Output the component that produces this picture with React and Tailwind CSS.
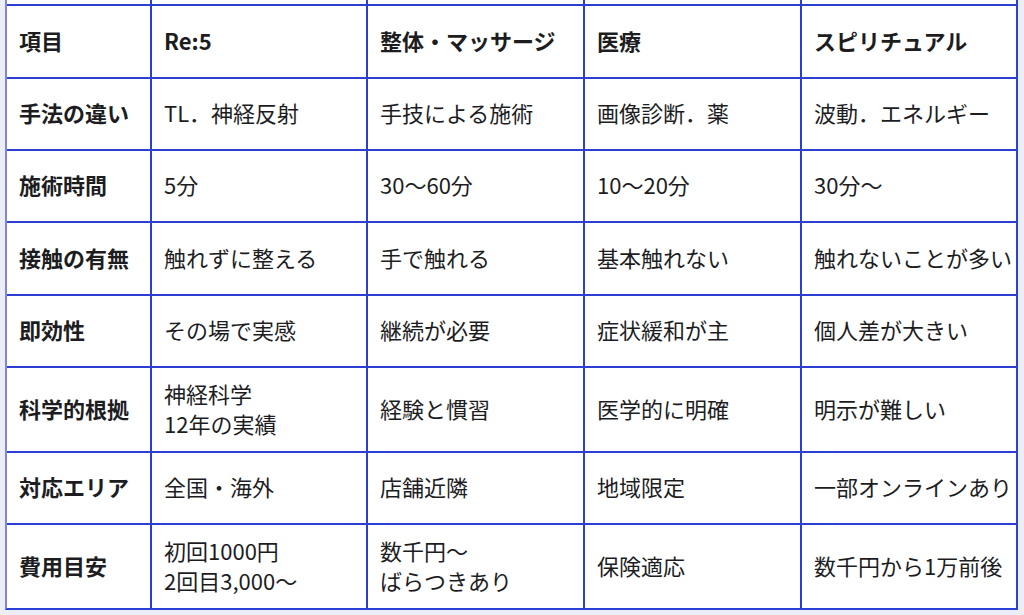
import React from 'react';

const rows = [
  { h: 'h-[73px]', cells: ['項目', 'Re:5', '整体・マッサージ', '医療', 'スピリチュアル'], head: true },
  { h: 'h-[72px]', cells: ['手法の違い', 'TL．神経反射', '手技による施術', '画像診断．薬', '波動．エネルギー'] },
  { h: 'h-[72px]', cells: ['施術時間', '5分', '30〜60分', '10〜20分', '30分〜'] },
  { h: 'h-[73px]', cells: ['接触の有無', '触れずに整える', '手で触れる', '基本触れない', '触れないことが多い'] },
  { h: 'h-[72px]', cells: ['即効性', 'その場で実感', '継続が必要', '症状緩和が主', '個人差が大きい'] },
  { h: 'h-[85px]', cells: ['科学的根拠', ['神経科学', '12年の実績'], '経験と慣習', '医学的に明確', '明示が難しい'] },
  { h: 'h-[72px]', cells: ['対応エリア', '全国・海外', '店舗近隣', '地域限定', '一部オンラインあり'] },
  { h: 'h-[85px]', cells: ['費用目安', ['初回1000円', '2回目3,000〜'], ['数千円〜', 'ばらつきあり'], '保険適応', '数千円から1万前後'] },
];

const widths = ['w-[145px]', 'w-[216px]', 'w-[217px]', 'w-[217px]', 'flex-1'];

const Cell = ({ value, index, bold }) => (
  <div
    className={`${widths[index]} ${index < 4 ? 'border-r-2' : ''} border-[#2c3fd4] flex flex-col justify-center pl-3 pr-1 pb-1 leading-[30px] whitespace-nowrap ${bold ? 'font-bold' : 'font-normal'}`}
  >
    {Array.isArray(value) ? value.map((line) => <span key={line}>{line}</span>) : <span>{value}</span>}
  </div>
);

export default function App() {
  return (
    <div className="w-[1024px] h-[615px] bg-[#eceef7] overflow-hidden">
      <div
        className="ml-[5px] w-[1013px] bg-white border-l-2 border-r-2 border-b-2 border-l-[#7d86dc] border-r-[#2c3fd4] border-b-[#2c3fd4] text-[22px] text-[#1d1d1f]"
        style={{ fontFamily: '"Noto Sans CJK JP", "Noto Sans", sans-serif' }}
      >
        <div className="flex h-[4px]">
          {widths.map((w, i) => (
            <div key={i} className={`${w} ${i < 4 ? 'border-r-2' : ''} border-[#2c3fd4]`} />
          ))}
        </div>
        {rows.map((row, r) => (
          <div key={r} className={`flex ${row.h} border-t-2 border-[#2c3fd4]`}>
            {row.cells.map((c, i) => (
              <Cell key={i} value={c} index={i} bold={row.head || i === 0} />
            ))}
          </div>
        ))}
      </div>
    </div>
  );
}
